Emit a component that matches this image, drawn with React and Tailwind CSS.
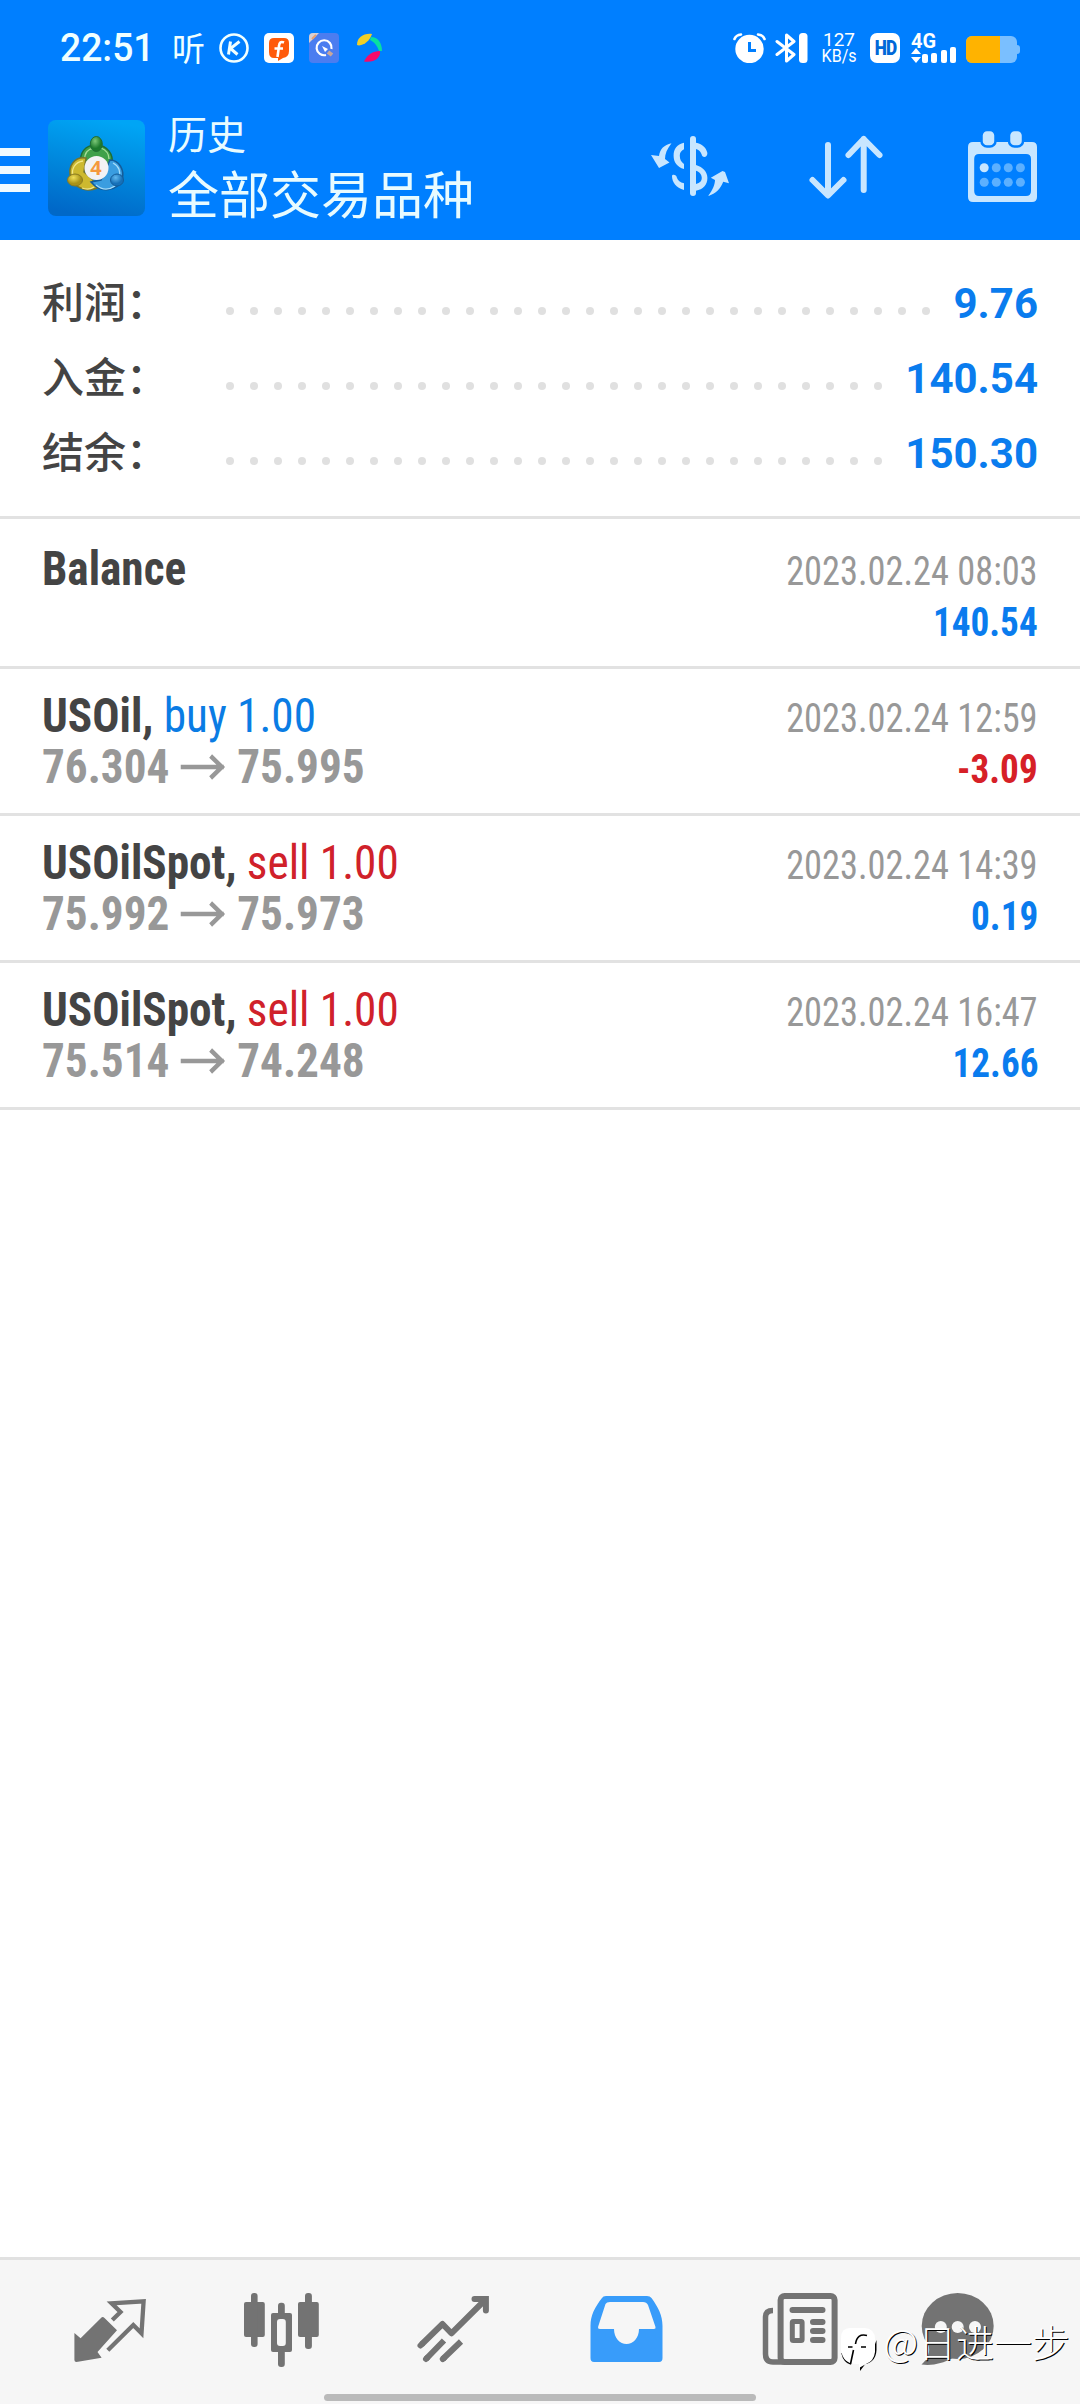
const summary = [
  { label: '利润：', value: '9.76', dots: 30 },
  { label: '入金：', value: '140.54', dots: 28 },
  { label: '结余：', value: '150.30', dots: 28 },
];

const deals = [
  { symbol: 'Balance', time: '2023.02.24 08:03', profit: '140.54' },
  { symbol: 'USOil,', side: 'buy', open: '76.304', close: '75.995', time: '2023.02.24 12:59', profit: '-3.09' },
  { symbol: 'USOilSpot,', side: 'sell', open: '75.992', close: '75.973', time: '2023.02.24 14:39', profit: '0.19' },
  { symbol: 'USOilSpot,', side: 'sell', open: '75.514', close: '74.248', time: '2023.02.24 16:47', profit: '12.66' },
];

const StatusBar = () => (
  <div className="flex h-[96px] items-center pl-[60px] text-[#f0ffff]">
    <span className="w-[112px] origin-left scale-x-[0.955] whitespace-nowrap text-[39px] font-medium leading-none">22:51</span>
    <span className="w-[47px] whitespace-nowrap pb-[2px] font-['Noto_Sans_CJK_SC',sans-serif] text-[33px] font-normal leading-[30px]">听</span>
    <svg className="mr-[15px] h-[30px] w-[30px]" viewBox="0 0 30 30" fill="none" stroke="currentColor">
      <circle cx="15" cy="15" r="13.5" strokeWidth="2.6" />
      <path d="M11.5 8.5L9.5 21.5M20.5 8.5L11.5 15.5L18.5 21.5" strokeWidth="3" />
    </svg>
    <svg className="mr-[15px] h-[30px] w-[30px]" viewBox="0 0 30 30">
      <rect width="30" height="30" rx="5" fill="#fff" />
      <path d="M10 5H20Q25 5 25 10V18Q25 24 19 25L14 28V25H10Q5 25 5 19V10Q5 5 10 5Z" fill="#ff5a0a" />
      <path d="M20 9.5Q15.5 7.5 15 13L13.5 24M10.5 15.5H19" fill="none" stroke="#fff" strokeWidth="2.6" />
    </svg>
    <svg className="mr-[18px] h-[30px] w-[30px]" viewBox="0 0 30 30">
      <rect width="30" height="30" rx="4" fill="#4b7df0" />
      <path d="M0 10V4Q0 0 4 0H10Z" fill="#d8cfd4" />
      <path d="M3 6L7 2" stroke="#e8a070" strokeWidth="2" />
      <path d="M17 22A7.5 7.5 0 1 1 22.5 16" fill="none" stroke="#fff" strokeWidth="2.2" />
      <path d="M13 13L19 16L16 19Z" fill="#fff" />
      <path d="M19 19L23 22" stroke="#c9a79a" strokeWidth="4" />
    </svg>
    <svg className="h-[30px] w-[26px]" viewBox="0 0 26 30">
      <path d="M0 12C0 4 7 0 15 1C13 7 8 12 2 12.5Z" fill="#f0cf28" />
      <path d="M14 4C21 4 25 10 25 18H22C20 12 17 9 13 7Z" fill="#08e0a0" />
      <path d="M23 18C24 25 17 30 7 28.5C10 22 16 18 23 18Z" fill="#f50a6a" />
    </svg>

    <div className="ml-auto flex items-center pr-[60px] text-white">
      <svg className="mr-[9px] h-[30px] w-[33px]" viewBox="0 0 33 30">
        <circle cx="16.5" cy="16" r="14.2" fill="currentColor" />
        <path d="M1.5 6Q3 2 8 1.5M31.5 6Q30 2 25 1.5" fill="none" stroke="currentColor" strokeWidth="2.6" strokeLinecap="round" />
        <path d="M16.5 9V17.5H23" fill="none" stroke="#007fff" strokeWidth="3" />
      </svg>
      <svg className="mr-[13px] h-[30px] w-[33px]" viewBox="0 0 33 30">
        <path d="M2 8.5L19 21.5L11.5 28V2L19 8.5L2 21.5" fill="none" stroke="currentColor" strokeWidth="3" strokeLinecap="round" strokeLinejoin="round" />
        <rect x="24" width="8.5" height="30" rx="3.5" fill="currentColor" />
      </svg>
      <div className="flex w-[36px] flex-col items-center text-[19px] leading-[17px]">
        <span>127</span>
        <span className="origin-center scale-x-[0.92] text-[17.5px]">KB/s</span>
      </div>
      <div className="ml-[13px] flex h-[30px] w-[30px] items-center justify-center rounded-[7px] bg-white text-[20px] font-black tracking-[-1px] text-[#0068d8]">
        <span className="scale-x-[0.86]">HD</span>
      </div>
      <div className="ml-[11px] flex h-[30px] w-[46px] flex-col">
        <span className="h-[16px] origin-left scale-x-[0.95] text-[21px] font-bold leading-[16px]">4G</span>
        <svg className="h-[14px] w-[46px] overflow-visible" viewBox="0 0 46 14" fill="currentColor">
          <path d="M0 5L5 -1L10 5ZM0 8H10L5 14Z" />
          <rect x="11" y="5" width="6" height="9" rx="2" />
          <rect x="20" y="4" width="6" height="10" rx="2" />
          <rect x="30" y="1" width="6" height="13" rx="2" />
          <rect x="39" y="-2" width="6" height="16" rx="2" />
        </svg>
      </div>
      <div className="ml-[9px] mt-[3px] flex items-center">
        <div className="h-[27px] w-[51px] overflow-hidden rounded-[6px] bg-[#7abfff]">
          <div className="h-full w-[34px] bg-[#ffb300]" />
        </div>
        <div className="h-[9px] w-[3px] rounded-r-sm bg-[#7abfff]" />
      </div>
    </div>
  </div>
);

const AppLogo = () => (
  <svg className="ml-[18px] h-[96px] w-[97px]" viewBox="0 0 97 96">
    <defs>
      <linearGradient id="tile" x1="0.6" y1="0" x2="0.4" y2="1">
        <stop offset="0" stopColor="#00a5f5" />
        <stop offset="0.55" stopColor="#0084da" />
        <stop offset="1" stopColor="#0068c8" />
      </linearGradient>
      <radialGradient id="green" cx="0.4" cy="0.3">
        <stop offset="0" stopColor="#7cc878" />
        <stop offset="1" stopColor="#1d7a2c" />
      </radialGradient>
      <radialGradient id="gold" cx="0.4" cy="0.3">
        <stop offset="0" stopColor="#f0df58" />
        <stop offset="1" stopColor="#a89218" />
      </radialGradient>
      <radialGradient id="sky" cx="0.4" cy="0.3">
        <stop offset="0" stopColor="#62b8ee" />
        <stop offset="1" stopColor="#1670b8" />
      </radialGradient>
    </defs>
    <rect width="97" height="96" rx="8" fill="url(#tile)" />
    <path d="M33 44C31 33 37 25 48 25S66 34 64 45L58 49L48 37L38 43Z" fill="#3fa04a" stroke="#1f6d35" strokeWidth="1.5" />
    <path d="M37 40C36 33 40 29 46 28M61 39C61 34 58 30 53 28" fill="none" stroke="#a5dd98" strokeWidth="1.3" />
    <path d="M38 38C27 36 19 46 23 58C26 67 38 73 49 68L44 59L36 52Z" fill="#cdb92f" stroke="#77752a" strokeWidth="1.5" />
    <path d="M35 41C27 42 23 49 25 56M34 68C39 70 43 69 46 67" fill="none" stroke="#f4e888" strokeWidth="1.3" />
    <path d="M62 40C71 40 77 50 74 60C69 71 53 74 43 62L53 60Z" fill="#3a9de0" stroke="#145c99" strokeWidth="1.5" />
    <path d="M65 43C71 46 73 52 71 57M48 65C54 70 61 70 67 66" fill="none" stroke="#a6ddfa" strokeWidth="1.3" />
    <ellipse cx="48.3" cy="24" rx="6" ry="7.5" fill="url(#green)" stroke="#1f6d35" />
    <ellipse cx="27" cy="60" rx="7.5" ry="6" fill="url(#gold)" stroke="#8a7a20" />
    <ellipse cx="69" cy="60" rx="6.5" ry="6" fill="url(#sky)" stroke="#145c99" />
    <circle cx="48.5" cy="48" r="12" fill="#f2f2f4" />
    <text x="48" y="55" textAnchor="middle" fontFamily="Open Sans, sans-serif" fontSize="20" fontWeight="700" fill="#f5993d">4</text>
  </svg>
);

const Header = () => (
  <header className="h-[240px] bg-[#007fff]">
    <StatusBar />
    <div className="flex h-[144px] items-center">
      <div className="mt-[4px] flex w-[30px] flex-col gap-[10px]">
        <div className="h-[8px] bg-[#f0faff]" />
        <div className="h-[8px] bg-[#f0faff]" />
        <div className="h-[8px] bg-[#f0faff]" />
      </div>
      <AppLogo />
      <div className="mb-[13px] ml-[23px] whitespace-nowrap font-['Noto_Sans_CJK_SC',sans-serif] text-[#e8fbff]">
        <div className="text-[39px] font-normal leading-[60px]">历史</div>
        <div className="text-[51px] font-normal leading-[60px]">全部交易品种</div>
      </div>
      <div className="mb-[4px] ml-auto flex items-start pr-[43px] text-[#c8e6ff]">
        <svg className="mr-[76px] mt-[3px] h-[66px] w-[84px]" viewBox="0 0 84 66" fill="currentColor">
          <path d="M3 21L11 34L21.5 28.5L17 25C17 20 19 15 23.5 9.3C16 11 12 15 11 22Z" />
          <path d="M36 8.7C29 10 25.6 15 25.6 21.7C25.6 28 29 33 36 35V30C33 28 31.8 25 31.8 21.7C31.8 18.5 33 17 36 15.3Z" />
          <path d="M24 42C24 40 28.5 40 29 44C30 46.5 32 48.5 36 49.3V56C28 54 24 48 24 42Z" />
          <rect x="42" y="2" width="6" height="60" rx="3" />
          <path d="M48 8.7C54 10 58 13 59.4 19C59.4 24 54 24 53.5 20C52 17 51 16 48 15V31C55 33 59.4 38 59.4 44C59.4 51 55 55.5 48 56.7V50C52 49 53.8 47 53.8 44C53.8 41 52 38 48 36.7Z" />
          <path d="M60 62C65 56 67 50 67 46L62.8 43.7L74.5 37L77 38L81 49.3L75.2 47.7C73 54 68 60 60 62Z" />
        </svg>
        <svg className="mr-[84px] mt-[3px] h-[66px] w-[76px]" viewBox="0 0 76 66" fill="none" stroke="currentColor" strokeWidth="6" strokeLinecap="round" strokeLinejoin="round">
          <path d="M20 11V61M4.5 46L20 61.5L35.5 46" />
          <path d="M55.7 56V5M40.5 21L55.7 5L71.500 21" />
        </svg>
        <svg className="h-[71px] w-[69px]" viewBox="0 0 69 71">
          <path fillRule="evenodd" d="M5 11H64Q69 11 69 16V66Q69 71 64 71H5Q0 71 0 66V16Q0 11 5 11ZM11 23Q6.2 23 6.2 28V60Q6.2 65 11 65H58Q63 65 63 60V28Q63 23 58 23Z" fill="currentColor" />
          <rect x="13.5" y="-1" width="14" height="16.5" rx="5.5" fill="currentColor" stroke="#007fff" strokeWidth="2.5" />
          <rect x="41" y="-1" width="14" height="16.5" rx="5.5" fill="currentColor" stroke="#007fff" strokeWidth="2.5" />
          <circle cx="16.2" cy="36.7" r="4.5" fill="currentColor" />
          <g fill="#5cb0ff">
            <circle cx="28.3" cy="36.7" r="4.5" />
            <circle cx="40.3" cy="36.7" r="4.5" />
            <circle cx="52.4" cy="36.7" r="4.5" />
            <circle cx="16.2" cy="51.3" r="4.5" />
            <circle cx="28.3" cy="51.3" r="4.5" />
            <circle cx="40.3" cy="51.3" r="4.5" />
            <circle cx="52.4" cy="51.3" r="4.5" />
          </g>
        </svg>
      </div>
    </div>
  </header>
);

const SummaryRow = ({ label, value, dots }) => (
  <div className="flex h-[75px] items-center">
    <span className="w-[184px] pb-[5px] font-['Noto_Sans_CJK_SC',sans-serif] text-[42px] font-medium leading-[70px] text-[#444]">{label}</span>
    <div className="mt-[17px] flex gap-[16px]">
      {Array.from({ length: dots }, (_, i) => (
        <i key={i} className="h-[8px] w-[8px] rounded-full bg-[#e0e0e0]" />
      ))}
    </div>
    <span className="ml-auto pt-[2px] text-[42px] font-bold text-[#0a7cee]">{value}</span>
  </div>
);

const DealRow = ({ symbol, side, open, close, time, profit }) => (
  <div className="flex h-[147px] justify-between border-b-[3px] border-[#e2e2e2] px-[42px] pt-[21px] leading-[51px] [font-stretch:75%] first:h-[150px] first:pt-[24px]">
    <div className="origin-left scale-x-[0.942] whitespace-nowrap text-[48px]">
      <div>
        <span className="font-bold text-[#444]">{symbol}</span>
        {side && <span className={side === 'buy' ? 'text-[#0a7ce4]' : 'text-[#d0212a]'}> {side} 1.00</span>}
      </div>
      {open && (
        <div className="flex items-center font-bold text-[#989898]">
          {open}
          <svg className="ml-[12px] mr-[11px] h-[26px] w-[49px]" viewBox="0 0 49 26" fill="none" stroke="currentColor" strokeWidth="4.5">
            <path d="M0 13H46M32 2L44 13L32 24" />
          </svg>
          {close}
        </div>
      )}
    </div>
    <div className="flex flex-col items-end whitespace-nowrap pt-[3px] text-[40px]">
      <div className="origin-right scale-x-[0.909] text-[#989898]">{time}</div>
      <div className={profit.startsWith('-') ? 'origin-right scale-x-[0.93] font-bold text-[#d62027]' : 'origin-right scale-x-[0.93] font-bold text-[#0a7cee]'}>{profit}</div>
    </div>
  </div>
);

const BottomNav = () => (
  <nav className="relative flex h-[147px] flex-col border-t-[3px] border-[#e1e1e1] bg-[#f6f6f6] text-[#737373]">
    <div className="flex pl-[74px] pt-[32px]">
      <svg className="mr-[95px] mt-[6px] h-[66px] w-[74px]" viewBox="0 0 74 66">
        <path d="M0.4 35L6.6 40.3L27 20Q28.6 18 30.5 20L43 32.3L23.5 54L27.6 59.7L2.5 64Q0.4 64 0.4 62Z" fill="currentColor" />
        <path d="M38.3 22L46.5 14L37.6 5.3L69.6 3.3L67.5 35.3L59.3 27L33.8 52.3" fill="none" stroke="currentColor" strokeWidth="4.3" />
      </svg>
      <svg className="mr-[97px] h-[76px] w-[76px]" viewBox="0 0 76 76" fill="currentColor">
        <rect x="1" y="10" width="20.8" height="35" rx="2" />
        <rect x="8" y="1" width="6.6" height="54" rx="3" />
        <rect x="35" y="10.7" width="6.8" height="64.3" rx="3" />
        <rect x="28" y="21" width="21" height="39" rx="2" />
        <rect x="34" y="27" width="8.8" height="27" rx="3" fill="#f6f6f6" />
        <rect x="55" y="10" width="20.8" height="35" rx="2" />
        <rect x="62" y="1" width="6.9" height="56" rx="3" />
      </svg>
      <svg className="mr-[98px] mt-[2px] h-[70px] w-[76px]" viewBox="0 0 76 70" fill="none" stroke="currentColor" strokeWidth="6">
        <path d="M5.5 50.5L26.5 30L35.4 39.3L69 6" strokeLinejoin="round" />
        <path d="M58.5 5H69.9V16.5" strokeLinecap="round" />
        <path d="M4.5 51.5L6 50M10 65L11 64M26.8 65L28 64" strokeLinecap="round" />
        <path d="M10 65L28 46.5M26.8 65L45 47.5" />
      </svg>
      <svg className="mr-[99px] mt-[4px] h-[66px] w-[73px]" viewBox="0 0 73 66">
        <path d="M12 2Q13 0 16 0H57Q60 0 61.5 2C68 11 72.5 19 72.5 30V62Q72.5 66 69 66H4Q0.5 66 0.5 62V30C0.5 19 5 11 12 2Z" fill="#389cfa" />
        <path d="M15.5 8Q16.5 6 20 6H53Q56.5 6 58 9L65.5 31Q66 33 64 33H49C49 42 43 48 36.5 48S24 42 24 33H10Q7.5 33 8.2 30.5Z" fill="#f6f6f6" />
      </svg>
      <svg className="mr-[83px] mt-px h-[73px] w-[76px]" viewBox="0 0 76 73" fill="none" stroke="currentColor">
        <rect x="18.6" y="3" width="54" height="66" rx="4" strokeWidth="6" />
        <path d="M11 17.5Q3.5 17.5 3.5 24V61Q3.5 69 11 69H22" strokeWidth="5.5" />
        <rect x="30.3" y="28.5" width="9.8" height="19" rx="1" strokeWidth="5" />
        <path d="M30.5 17H60.5M51 29H60.5M51 38H60.5M51 47H60.5" strokeWidth="6" strokeLinecap="round" />
      </svg>
      <svg className="mt-px h-[73px] w-[74px]" viewBox="0 0 74 73" fill="currentColor">
        <ellipse cx="36.7" cy="33" rx="36" ry="33" />
        <path d="M7 50C10 59 7 66 0.5 71.5C12 73 22 70 31 65.5Z" />
        <g fill="#f6f6f6">
          <circle cx="19.8" cy="34" r="6" />
          <circle cx="36.7" cy="34" r="6" />
          <circle cx="54" cy="34" r="6" />
        </g>
      </svg>
    </div>
    <div className="mx-auto mb-[3px] mt-auto h-[7px] w-[432px] rounded-full bg-[#bababa]" />
    {/* author watermark */}
    <div className="absolute right-[10px] top-[50px] flex items-center text-white">
      <svg className="mr-[5px] mt-[18px] h-[44px] w-[38px]" viewBox="0 0 38 44">
        <path d="M20 43V37Q36 36 36.500 22V12L30 30Z" fill="#000" />
        <path d="M2 25Q4 34 11 36" fill="none" stroke="#000" strokeWidth="1.5" />
        <path d="M10 0H25Q35 1 35 11V24Q34 33 26 36L19 40V36Q3 37 1 22V10Q1 0 10 0Z" fill="#fff" />
        <path d="M27 7.500Q17 5 15.500 16M8 19H12.500M21 19H26M13.500 22L10.500 36" fill="none" stroke="#000" strokeWidth="1.6" />
      </svg>
      <span className="whitespace-nowrap font-['Noto_Sans_CJK_SC',sans-serif] text-[38px] font-light leading-[54px] [text-shadow:1px_1px_0_#000]">@日进一步</span>
    </div>
  </nav>
);

const App = () => (
  <div className="flex h-[2404px] w-[1080px] flex-col overflow-hidden bg-white font-['Roboto','Noto_Sans_CJK_SC',sans-serif]">
    <Header />
    <section className="h-[279px] border-b-[3px] border-[#e2e2e2] px-[42px] pt-[25px]">
      {summary.map((row) => (
        <SummaryRow key={row.label} {...row} />
      ))}
    </section>
    <main className="flex-1">
      {deals.map((deal) => (
        <DealRow key={deal.time} {...deal} />
      ))}
    </main>
    <BottomNav />
  </div>
);

export default App;
